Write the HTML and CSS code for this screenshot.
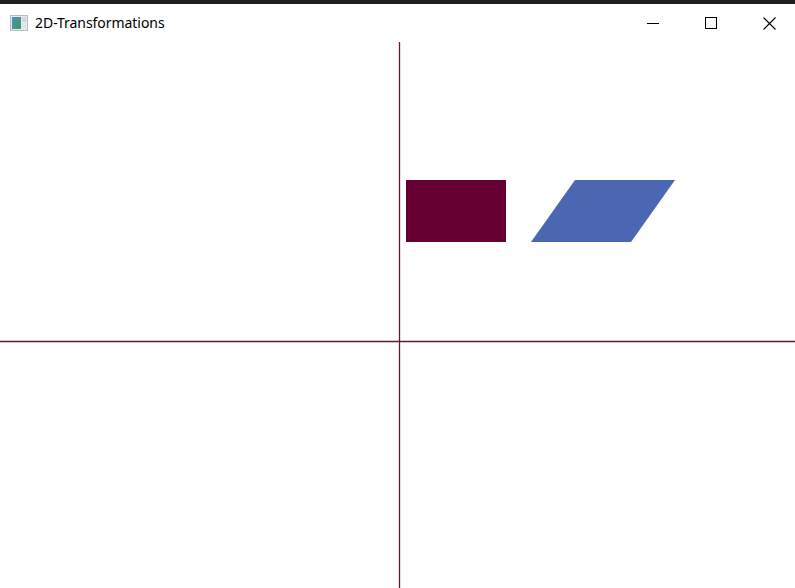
FILE: index.html
```html
<!DOCTYPE html>
<html>
<head>
<meta charset="utf-8">
<link rel="stylesheet" href="styles.css">
</head>
<body>
<div class="window">
  <div class="frame-top"></div>
  <div class="titlebar">
    <div class="title-left">
      <svg class="app-icon" width="18" height="16" viewBox="0 0 18 16">
        <defs>
          <linearGradient id="g" x1="0" y1="0" x2="1" y2="1">
            <stop offset="0" stop-color="#4c8fbf"/>
            <stop offset="1" stop-color="#3f9a63"/>
          </linearGradient>
        </defs>
        <rect x="0.5" y="0.5" width="17" height="15" fill="#e8ecef" stroke="#b5bcc2"/>
        <rect x="2" y="2" width="9" height="12" fill="url(#g)"/>
        <rect x="12" y="2" width="4" height="5" fill="#cfd8d6"/>
        <rect x="12" y="8" width="4" height="6" fill="#dfe6e3"/>
      </svg>
      <span class="title">2D-Transformations</span>
    </div>
    <div class="controls">
      <div class="ctl">
        <svg width="12" height="12" viewBox="0 0 12 12"><line x1="0" y1="6.5" x2="12" y2="6.5" stroke="#000" stroke-width="1"/></svg>
      </div>
      <div class="ctl">
        <svg width="12" height="12" viewBox="0 0 12 12"><rect x="0.5" y="0.5" width="11" height="11" fill="none" stroke="#000" stroke-width="1"/></svg>
      </div>
      <div class="ctl">
        <svg width="13" height="13" viewBox="0 0 13 13"><path d="M0.5 0.5 L12.5 12.5 M12.5 0.5 L0.5 12.5" stroke="#000" stroke-width="1.1"/></svg>
      </div>
    </div>
  </div>
  <svg class="canvas" width="795" height="546" viewBox="0 42 795 546">
    <rect x="0" y="42" width="795" height="546" fill="#fff"/>
    <line x1="399.5" y1="42" x2="399.5" y2="588" stroke="#5e1a36" stroke-width="1.3"/>
    <line x1="0" y1="341.5" x2="795" y2="341.5" stroke="#5e1a36" stroke-width="1.3"/>
    <rect x="406" y="180" width="100" height="62" fill="#660033"/>
    <polygon points="531,242 575,180 675,180 631,242" fill="#4b67b1"/>
  </svg>
</div>
</body>
</html>
```

FILE: styles.css
```css
html, body {
  margin: 0;
  padding: 0;
  background: #fff;
  overflow: hidden;
}
.window {
  width: 795px;
  height: 588px;
  display: flex;
  flex-direction: column;
  overflow: hidden;
  font-family: "Noto Sans", "Open Sans", sans-serif;
}
.frame-top {
  height: 4px;
  background: #1f1f1f;
  flex: none;
}
.titlebar {
  height: 38px;
  flex: none;
  display: flex;
  align-items: center;
  justify-content: space-between;
  background: #fff;
}
.title-left {
  display: flex;
  align-items: center;
  padding-left: 10px;
  gap: 7px;
  margin-top: -1px;
}
.app-icon {
  display: block;
}
.title {
  font-size: 14px;
  color: #000;
  letter-spacing: -0.05px;
}
.controls {
  display: flex;
  height: 100%;
  margin-right: -3px;
}
.ctl {
  width: 58px;
  height: 100%;
  display: flex;
  align-items: center;
  justify-content: center;
}
.canvas {
  display: block;
  flex: none;
}
```
